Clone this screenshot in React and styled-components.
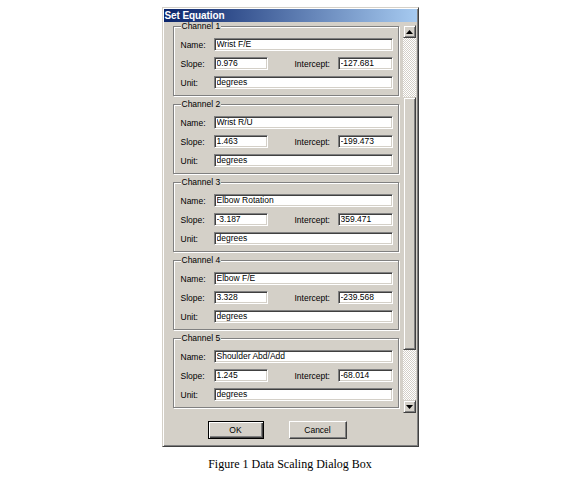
import styled, { createGlobalStyle } from "styled-components";

const GlobalStyle = createGlobalStyle`
  body {
    margin: 0;
    background: #fff;
    font-family: "Liberation Sans", Arial, sans-serif;
  }
`;

const channels = [
  { id: 1, name: "Wrist F/E", slope: "0.976", intercept: "-127.681", unit: "degrees" },
  { id: 2, name: "Wrist R/U", slope: "1.463", intercept: "-199.473", unit: "degrees" },
  { id: 3, name: "Elbow Rotation", slope: "-3.187", intercept: "359.471", unit: "degrees" },
  { id: 4, name: "Elbow F/E", slope: "3.328", intercept: "-239.568", unit: "degrees" },
  { id: 5, name: "Shoulder Abd/Add", slope: "1.245", intercept: "-68.014", unit: "degrees" },
];

const Page = styled.div`
  width: 580px;
  display: flex;
  flex-direction: column;
  align-items: center;
  padding-top: 7px;
`;

const Dialog = styled.div`
  width: 257px;
  box-sizing: border-box;
  background: #d4d0c8;
  border: 1px solid;
  border-color: #d4d0c8 #404040 #404040 #d4d0c8;
  box-shadow: inset 1px 1px 0 #fff, inset -1px -1px 0 #808080;
  padding: 1px;
  display: flex;
  flex-direction: column;
`;

const TitleBar = styled.div`
  height: 13px;
  background: linear-gradient(to right, #0a246a, #a6caf0);
  color: #fff;
  font-weight: bold;
  font-size: 10px;
  line-height: 13px;
  padding-left: 1px;
  letter-spacing: -0.1px;
`;

const Body = styled.div`
  height: 395px;
  display: flex;
`;

const Panel = styled.div`
  width: 238px;
  overflow: hidden;
  padding: 0 3px 0 9px;
  box-sizing: border-box;
`;

const Group = styled.fieldset`
  margin: 0 0 3px 0;
  padding: 6px 5px 6px 7px;
  min-width: 0;
  border: 1px solid #808080;
  box-shadow: 1px 1px 0 #fff, inset 1px 1px 0 #fff;
  display: flex;
  flex-direction: column;
  gap: 6px;

  &:first-child {
    margin-top: -1px;
  }
`;

const Legend = styled.legend`
  padding: 0 1px;
  font-size: 8.5px;
  line-height: 11px;
  background: #d4d0c8;
  color: #000;
`;

const Row = styled.div`
  display: flex;
  align-items: center;
  height: 13px;
`;

const Label = styled.span`
  font-size: 8.5px;
  color: #000;
  width: ${(p) => p.$w || 33}px;
  margin-left: ${(p) => p.$ml || 0}px;
  flex-shrink: 0;
`;

const Field = styled.input`
  box-sizing: border-box;
  height: 13px;
  width: ${(p) => (p.$w ? `${p.$w}px` : "auto")};
  flex: ${(p) => (p.$w ? "0 0 auto" : "1 1 0")};
  min-width: 0;
  margin: 0;
  padding: 0 0 1px 2px;
  background: #fff;
  border: 1px solid;
  border-color: #808080 #fff #fff #808080;
  box-shadow: inset 1px 1px 0 #404040, inset -1px -1px 0 #d4d0c8;
  font-family: "Liberation Sans", Arial, sans-serif;
  font-size: 8.5px;
  color: #000;
  outline: none;
`;

const ScrollBar = styled.div`
  width: 13px;
  margin: 3px 0 4px 1px;
  display: flex;
  flex-direction: column;
`;

const ArrowButton = styled.div`
  width: 13px;
  height: 13px;
  box-sizing: border-box;
  background: #d4d0c8;
  border: 1px solid;
  border-color: #d4d0c8 #404040 #404040 #d4d0c8;
  box-shadow: inset 1px 1px 0 #fff, inset -1px -1px 0 #808080;
  display: flex;
  align-items: center;
  justify-content: center;
`;

const Track = styled.div`
  height: ${(p) => (p.$h ? `${p.$h}px` : "auto")};
  flex: ${(p) => (p.$h ? "0 0 auto" : "1 1 0")};
  background: repeating-conic-gradient(#d4d0c8 0 25%, #fff 0 50%) 0 0 / 2px 2px;
`;

const Thumb = styled.div`
  height: 253px;
  box-sizing: border-box;
  background: #d4d0c8;
  border: 1px solid;
  border-color: #d4d0c8 #404040 #404040 #d4d0c8;
  box-shadow: inset 1px 1px 0 #fff, inset -1px -1px 0 #808080;
`;

const Footer = styled.div`
  height: 28px;
  display: flex;
  align-items: flex-start;
  padding: 4px 0 0 44px;
  box-sizing: border-box;
  gap: 25px;
`;

const Button = styled.button`
  width: ${(p) => p.$w}px;
  height: 18px;
  box-sizing: border-box;
  margin: 0;
  padding: 0 0 1px 0;
  background: #d4d0c8;
  border: 1px solid;
  border-color: ${(p) => (p.$default ? "#000" : "#fff #404040 #404040 #fff")};
  box-shadow: ${(p) =>
    p.$default
      ? "inset 1px 1px 0 #fff, inset -1px -1px 0 #404040, inset -2px -2px 0 #808080"
      : "inset -1px -1px 0 #808080"};
  font-family: "Liberation Sans", Arial, sans-serif;
  font-size: 8.5px;
  color: #000;
`;

const Caption = styled.div`
  margin-top: 10px;
  font-family: "Liberation Serif", "Times New Roman", serif;
  font-size: 12px;
  color: #000;
`;

const Arrow = ({ down }) => (
  <svg width="7" height="4" viewBox="0 0 7 4">
    <polygon points={down ? "0,0 7,0 3.5,4" : "0,4 7,4 3.5,0"} fill="#000" />
  </svg>
);

export default function App() {
  return (
    <>
      <GlobalStyle />
      <Page>
        <Dialog>
          <TitleBar>Set Equation</TitleBar>
          <Body>
            <Panel>
              {channels.map((c) => (
                <Group key={c.id}>
                  <Legend>Channel {c.id}</Legend>
                  <Row>
                    <Label>Name:</Label>
                    <Field readOnly value={c.name} />
                  </Row>
                  <Row>
                    <Label>Slope:</Label>
                    <Field readOnly $w={54} value={c.slope} />
                    <Label $w={43} $ml={27}>
                      Intercept:
                    </Label>
                    <Field readOnly value={c.intercept} />
                  </Row>
                  <Row>
                    <Label>Unit:</Label>
                    <Field readOnly value={c.unit} />
                  </Row>
                </Group>
              ))}
            </Panel>
            <ScrollBar>
              <ArrowButton>
                <Arrow />
              </ArrowButton>
              <Track $h={59} />
              <Thumb />
              <Track />
              <ArrowButton>
                <Arrow down />
              </ArrowButton>
            </ScrollBar>
          </Body>
          <Footer>
            <Button $default $w={56}>
              OK
            </Button>
            <Button $w={58}>Cancel</Button>
          </Footer>
        </Dialog>
        <Caption>Figure 1 Data Scaling Dialog Box</Caption>
      </Page>
    </>
  );
}
